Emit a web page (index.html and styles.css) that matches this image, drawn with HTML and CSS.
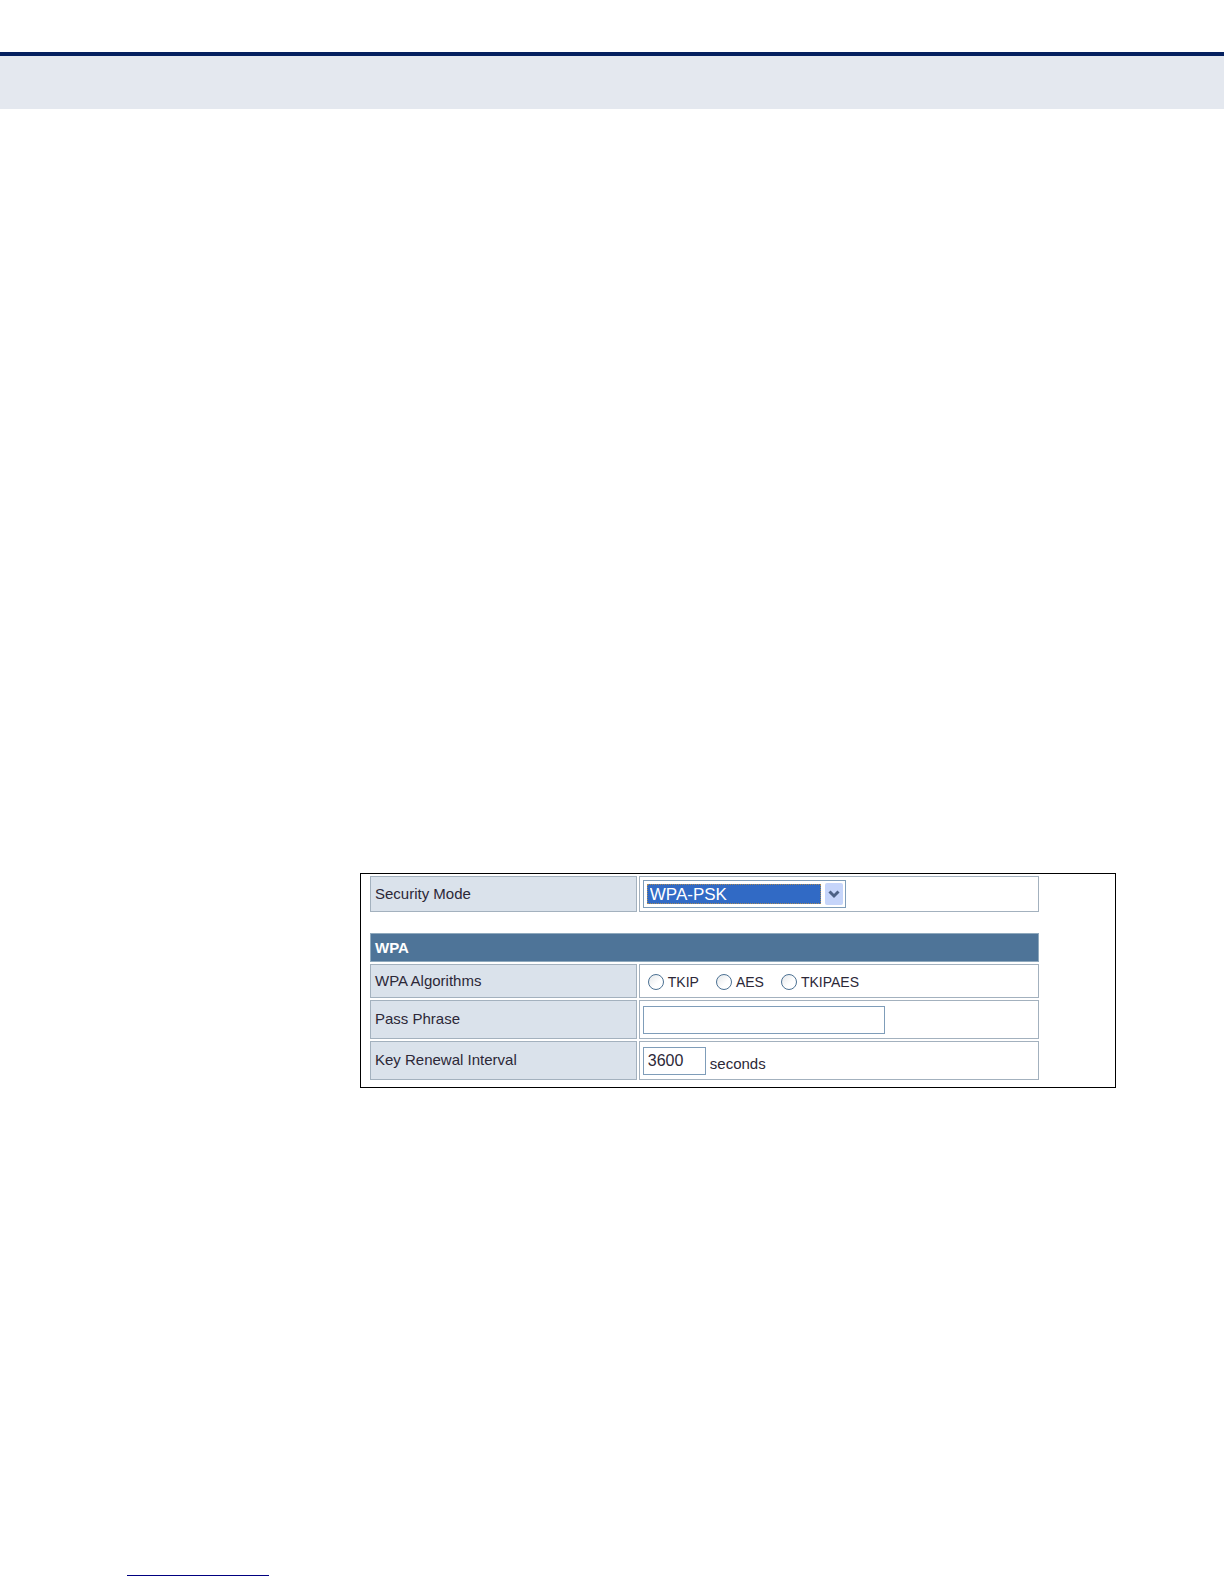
FILE: index.html
```html
<!DOCTYPE html>
<html lang="en">
  <head>
    <meta charset="UTF-8" />
    <meta name="viewport" content="width=device-width, initial-scale=1.0" />
    <title>Security Mode</title>
    <link rel="stylesheet" href="styles.css">
  </head>
  <body>
    <header class="page-header"></header>
    <main>
      <form class="panel">
        <table class="settings">
          <colgroup>
            <col class="name-col" />
            <col />
          </colgroup>
          <tr>
            <th scope="row"><label for="mode">Security Mode</label></th>
            <td>
              <span class="select-box">
                <select id="mode">
                  <option>WPA-PSK</option>
                </select>
                <svg class="arrow" viewBox="0 0 18 22" aria-hidden="true">
                  <rect width="18" height="22" rx="2" fill="#c6d5fa" />
                  <path d="M4.5 8.5L9 13L13.5 8.5" fill="none" stroke="#4d6185" stroke-width="3" />
                </svg>
              </span>
            </td>
          </tr>
        </table>
        <table class="settings">
          <colgroup>
            <col class="name-col" />
            <col />
          </colgroup>
          <tr class="title">
            <th colspan="2">WPA</th>
          </tr>
          <tr class="algorithms">
            <th scope="row">WPA Algorithms</th>
            <td>
              <div class="radios">
                <label><input type="radio" name="algorithm" />TKIP</label>
                <label><input type="radio" name="algorithm" />AES</label>
                <label><input type="radio" name="algorithm" />TKIPAES</label>
              </div>
            </td>
          </tr>
          <tr>
            <th scope="row"><label for="phrase">Pass Phrase</label></th>
            <td><input type="text" id="phrase" class="phrase" /></td>
          </tr>
          <tr>
            <th scope="row"><label for="interval">Key Renewal Interval</label></th>
            <td>
              <div class="interval">
                <input type="text" id="interval" value="3600" />
                <span>seconds</span>
              </div>
            </td>
          </tr>
        </table>
      </form>
    </main>
    <footer><div class="footer-line"></div></footer>
  </body>
</html>
```

FILE: styles.css
```css
* {
  box-sizing: border-box;
}

body {
  display: flex;
  flex-direction: column;
  min-height: 100vh;
  margin: 0;
  background-color: white;
  color: #2c2838;
  font-family: "Liberation Sans", Arial, sans-serif;
  font-size: 15px;
}

.page-header {
  height: 57px;
  margin-top: 52px;
  border-top: 4px solid #05205f;
  background-color: #e4e8ef;
}

main {
  flex: 1;
  padding: 764px 108px 0 360px;
}

.panel {
  padding: 0 7px 5px;
  border: 1px solid black;
}

.settings {
  width: 100%;
  max-width: 673px;
  table-layout: fixed;
  border-spacing: 2px;
}

.settings + .settings {
  margin-top: 17px;
}

.name-col {
  width: 40%;
}

.settings th,
.settings td {
  height: 39px;
  border: 1px solid #a3b1be;
  text-align: left;
}

.settings th {
  padding: 0 4px 2px;
  background-color: #dae2eb;
  font-weight: normal;
}

.settings td {
  padding: 0 3px;
}

.settings:first-child th,
.settings:first-child td {
  height: 36px;
}

.settings .title th {
  height: 29px;
  padding: 0 4px;
  border-color: #8fa9bd;
  background-color: #4e7498;
  color: white;
  font-weight: bold;
}

.settings .algorithms th,
.settings .algorithms td {
  height: 34px;
}

input[type="text"],
select {
  display: block;
  height: 28px;
  margin: 0;
  border: 1px solid #7f9db9;
  border-radius: 0;
  background-color: white;
  color: #2c2838;
  font-family: inherit;
  font-size: 16px;
}

input[type="text"] {
  padding: 0 4px;
}

.select-box {
  display: block;
  position: relative;
  width: 203px;
}

select {
  width: 100%;
  padding: 0 24px 0 6px;
  appearance: none;
  background: linear-gradient(#316ac5, #316ac5) 3px 3px / calc(100% - 27px) calc(100% - 6px) no-repeat white;
  color: white;
  font-size: 17px;
}

/* focus ring around the selected value */
.select-box::before {
  content: "";
  position: absolute;
  inset: 4px 25px 4px 4px;
  border: 1px dotted #a58a5c;
  pointer-events: none;
}

.arrow {
  position: absolute;
  top: 3px;
  right: 3px;
  width: 18px;
  height: 22px;
  pointer-events: none;
}

.radios {
  display: flex;
  gap: 17px;
  padding: 2px 5px 0;
  font-size: 14px;
}

.radios label {
  display: flex;
  align-items: center;
  gap: 4px;
}

input[type="radio"] {
  width: 16px;
  height: 16px;
  margin: 0;
  appearance: none;
  border: 1px solid #4c7193;
  border-radius: 50%;
  background: linear-gradient(135deg, #e4e7ea, white 60%);
}

.phrase {
  width: 242px;
}

.interval {
  display: flex;
  align-items: flex-end;
  gap: 4px;
}

.interval input {
  width: 63px;
}

.interval span {
  line-height: 22px;
}

footer {
  padding: 0 127px 8px;
}

.footer-line {
  width: 142px;
  border-top: 1px solid #000080;
}
```
